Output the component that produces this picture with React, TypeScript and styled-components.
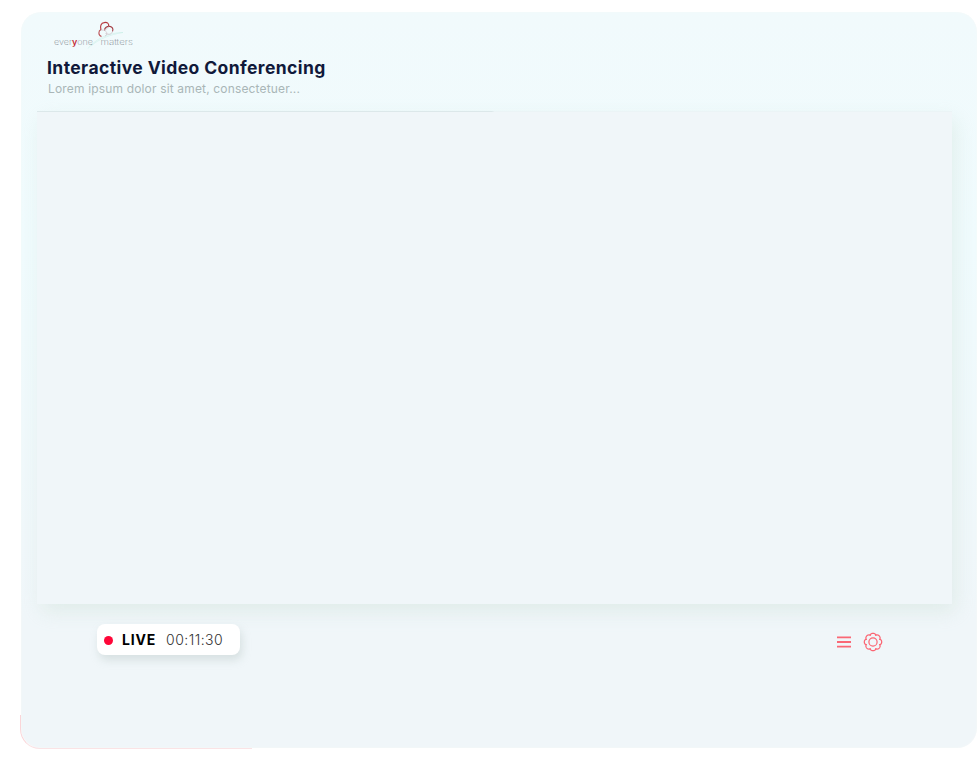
import React from "react";
import styled, { createGlobalStyle } from "styled-components";

const GlobalStyle = createGlobalStyle`
  * { box-sizing: border-box; }
  body { margin: 0; background: #fff; font-family: Inter, "Open Sans", sans-serif; overflow: hidden; }
`;

const Page = styled.div`
  height: 758px;
  padding: 12px 2.5px 10px 20.5px;
`;

const Panel = styled.main`
  position: relative;
  height: 736px;
  padding: 9px 24px 0 16.5px;
  border-radius: 20px;
  background: linear-gradient(#f1fafc 0%, #f0fbfd 32%, #f0f6f9 83%, #f0f6f9 100%);
  box-shadow: inset 0 0 2px #f7f9f8;
`;

const CornerAccent = styled.span`
  position: absolute;
  left: -0.5px;
  bottom: -1px;
  width: 232px;
  height: 34px;
  border-left: 1px solid #fad5d8;
  border-bottom: 1px solid #fae3e5;
  border-bottom-left-radius: 20px;
`;

const Header = styled.header`
  display: flex;
  flex-direction: column;
  height: 90px;
  padding-left: 10px;
`;

const Logo = styled.svg`
  width: 90px;
  height: 30px;
  margin-left: 3px;
  flex: none;
`;

const Title = styled.h1`
  margin: 5px 0 0;
  font-size: 17.5px;
  line-height: 24px;
  font-weight: 700;
  letter-spacing: 0.41px;
  color: #10193a;
  white-space: nowrap;
`;

const Subtitle = styled.p`
  margin: -1px 0 0 1px;
  font-size: 12px;
  line-height: 20px;
  letter-spacing: 0.16px;
  color: #a9b6b7;
  white-space: nowrap;
`;

const Stage = styled.section`
  height: 493px;
  width: 915px;
  background: #f0f6f9;
  border-top: 1px solid;
  border-image: linear-gradient(90deg, #dce8ea 49.7%, #ebf4f6 50%) 1;
  box-shadow: 4px 8px 18px -1px rgba(190, 215, 199, 0.32);
`;

const Footer = styled.footer`
  display: flex;
  justify-content: space-between;
  padding: 20px 70px 0 60px;
`;

const LiveBadge = styled.div`
  display: flex;
  align-items: center;
  width: 143px;
  height: 31px;
  padding-left: 7px;
  border-radius: 8px;
  background: #fff;
  box-shadow: 2px 5px 9px rgba(174, 190, 187, 0.38);
  white-space: nowrap;
`;

const Dot = styled.span`
  width: 9px;
  height: 9px;
  margin: 1px 9px 0 0;
  border-radius: 50%;
  background: #ff0638;
`;

const LiveLabel = styled.strong`
  width: 44px;
  font-size: 14px;
  font-weight: 700;
  letter-spacing: 0.85px;
  color: #000;
`;

const Timer = styled.time`
  font-size: 14px;
  font-weight: 300;
  letter-spacing: 0.48px;
  color: #333;
`;

const Actions = styled.div`
  display: flex;
  align-items: center;
  gap: 12px;
  height: 36px;
`;

const IconButton = styled.button`
  display: flex;
  padding: 0;
  border: 0;
  background: none;
`;

const gearPath =
  Array.from({ length: 128 }, (_, i) => {
    const a = (i / 128) * Math.PI * 2;
    const r = 7.1 + 1.6 * Math.sqrt(Math.abs(Math.cos(4 * a)));
    return `${i ? "L" : "M"}${(10 + r * Math.sin(a)).toFixed(2)} ${(10 - r * Math.cos(a)).toFixed(2)}`;
  }).join("") + "Z";

export default function App() {
  return (
    <>
      <GlobalStyle />
      <Page>
        <Panel>
          <CornerAccent />
          <Header>
            <Logo viewBox="0 0 90 30" fill="none">
              <path d="M38 27.5C45 18.5 58 11.5 73 11.5C60 13.5 49 18 41 25" stroke="#c5ece4" strokeWidth="0.5" />
              <g strokeWidth="1.1">
                <path d="M51 9C49.8 5.5 51 1.7 54.2 1.6C57 .8 59.5 2.6 58.5 5.5" stroke="#b5383e" />
                <path d="M54.5 9.5C54.5 6.5 57 5.2 59.8 5.4C62.4 5.7 63.6 8 62.5 10.5" stroke="#a33b42" />
                <path d="M51 8.5C48.2 9.7 48 14.3 51.5 15.5" stroke="#bd5459" />
                <path d="M51 9C54.5 9.6 57 8.5 58.5 5.5M54.5 9.5C57.5 10.5 57.5 14 55 15.2M55.5 12.4C59.2 14.2 61.8 13 62.5 10.5" stroke="#cdbfc4" strokeWidth="0.7" />
              </g>
              <g fontFamily='Inter, sans-serif' fontSize="8" fontWeight="200" fill="#7c858c">
                <text x="4" y="23.8" textLength="39" lengthAdjust="spacingAndGlyphs">
                  ever<tspan fill="#c52b35" fontWeight="600">y</tspan>one
                </text>
                <text x="50.5" y="23.8" textLength="32.5" lengthAdjust="spacingAndGlyphs">matters</text>
              </g>
            </Logo>
            <Title>Interactive Video Conferencing</Title>
            <Subtitle>Lorem ipsum dolor sit amet, consectetuer...</Subtitle>
          </Header>
          <Stage />
          <Footer>
            <LiveBadge>
              <Dot />
              <LiveLabel>LIVE</LiveLabel>
              <Timer>00:11:30</Timer>
            </LiveBadge>
            <Actions>
              <IconButton aria-label="Menu">
                <svg width="14" height="12" viewBox="0 0 14 12" stroke="#fa6876" strokeWidth="1.8">
                  <path d="M0 1.4H14M0 6H14M0 10.6H14" />
                </svg>
              </IconButton>
              <IconButton aria-label="Settings">
                <svg width="20" height="20" viewBox="0 0 20 20" fill="none" stroke="#fb6472" strokeWidth="1.2" strokeLinejoin="round">
                  <path d={gearPath} />
                  <circle cx="10" cy="10" r="4.1" />
                </svg>
              </IconButton>
            </Actions>
          </Footer>
        </Panel>
      </Page>
    </>
  );
}
